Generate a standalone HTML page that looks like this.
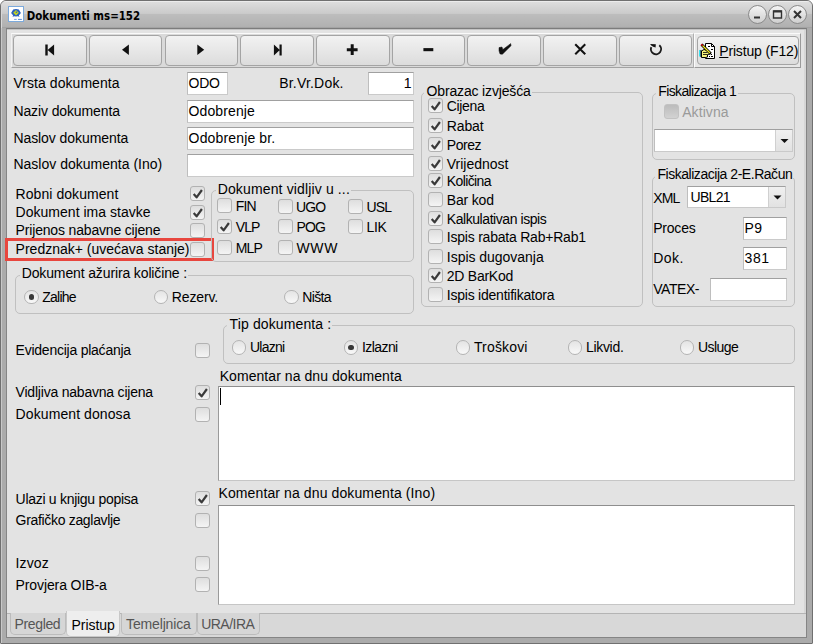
<!DOCTYPE html>
<html><head><meta charset="utf-8"><title>Dokumenti ms=152</title>
<style>
*{box-sizing:border-box;margin:0;padding:0}
html,body{width:813px;height:644px;overflow:hidden;background:#fff}
body{font-family:"Liberation Sans",sans-serif;font-size:14px;color:#000;position:relative}
.a{position:absolute;white-space:nowrap}
#win{left:0;top:0;width:813px;height:644px;border-radius:6px 6px 1px 1px;background:#ababab;border:1px solid #707070;overflow:hidden}
#hl{left:0;top:0;width:811px;height:642px;border-left:1px solid #c8c8c8}
#tb{left:0;top:0;width:811px;height:27px;background:linear-gradient(#dddddd 0,#cbcbcb 44%,#bdbdbd 48%,#b1b1b1 94%,#9c9c9c 100%);border-top:1px solid #ececec;border-left:1px solid #d8d8d8}
#title{left:25.800px;top:7px;font-family:"DejaVu Sans Condensed","DejaVu Sans",sans-serif;font-weight:bold;font-size:11.4px;line-height:16px}
#panel{left:6px;top:28px;width:801px;height:610px;background:#e3e3e3;border:1px solid #858585;border-top-color:#7c7c7c;box-shadow:inset 0 1px 0 #c4c4c4,inset -2px 0 0 #d6d6d6}
.t{line-height:16px;height:16px}
.in{background:#fff;border:1px solid #cacaca;border-top-color:#a0a0a0;border-left-color:#bebebe;overflow:hidden}
.ta{background:#fff;border:1px solid #c6c6c6;border-top-color:#8e8e8e;border-left-color:#9a9a9a}
.cb{width:15px;height:15px;border:1px solid #b2b2b2;border-radius:3px;background:linear-gradient(#dedede,#f4f4f4)}
.cb.dis{background:linear-gradient(#bcbcbc,#d2d2d2);border-color:#c2c2c2}
.rb{width:14.500px;height:14.500px;border:1px solid #b4b4b4;border-radius:7.500px;background:linear-gradient(#e4e4e4,#f8f8f8)}
.rb i{position:absolute;left:3.500px;top:3.500px;width:5.500px;height:5.500px;border-radius:2.750px;background:#383838}
.gb{border:1px solid #c0c0c0;border-radius:5px}
.btn{top:35px;height:30.5px;border:1px solid #a4a4a4;border-radius:4px;background:linear-gradient(#f2f2f2,#e7e7e7 50%,#dcdcdc)}
#tool{left:11px;top:33px;width:683px;height:34.700px;border-top:1px solid #fafafa;border-left:1px solid #f2f2f2;border-bottom:1px solid #a2a2a2;border-right:1px solid #b0b0b0;background:#dadada}
#tool2{left:693.700px;top:33px;width:107.800px;height:34.600px;border-top:1px solid #fafafa;border-left:1.500px solid #fcfcfc;border-bottom:1px solid #9a9a9a;border-right:1px solid #9a9a9a;background:#e7e7e7}
.cbb{background:linear-gradient(#f0f0f0,#e2e2e2);border-left:1px solid #d0d0d0}
#tabs{left:7px;top:612.7px;width:799px;height:24.300px;background:#d8d8d8;border-top:1px solid #b4b4b4}
.tab{border:1px solid #bcbcbc;border-top:none;border-radius:0 0 5px 5px;background:#d6d6d6}
.tab.act{background:#eeeeee;border-color:#c8c8c8}
.wb{width:19px;height:19px;border-radius:10px;border:1px solid #8a8a8a;background:linear-gradient(#f4f4f4,#cfcfcf);top:3.5px}
</style></head><body>
<div id="win" class="a">
<div id="hl" class="a"></div><div id="tb" class="a"></div>
<svg class="a" style="left:7px;top:5px" width="16" height="16" viewBox="0 0 16 16"><rect x="0.500" y="0.500" width="15" height="15" fill="#fff" stroke="#7caadc"/><path d="M3.100 6.900L5.200 3.600L8 2.900L10.800 3.600L12.900 6.900L10.800 9.400L11.600 10.800L9.600 10.200L8 10.600L6.400 10.200L4.400 10.800L5.200 9.400Z" fill="#2a62c0"/><path d="M5.200 6.700L8 4L10.800 6.700L8 9.400Z" fill="#c4d422"/><circle cx="8.400" cy="6.300" r="0.800" fill="#2a62c0"/><rect x="6.100" y="12.900" width="2.600" height="1" fill="#7aa4dc"/><rect x="10" y="12.900" width="3.900" height="1" fill="#5a8cd4"/></svg>
<div id="title" class="a">Dokumenti ms=152</div>
<div class="a wb" style="left:747px"><svg width="17" height="17" viewBox="0 0 17 17"><path d="M5 11.500h6" stroke="#333" stroke-width="2"/></svg></div>
<div class="a wb" style="left:767px"><svg width="17" height="17" viewBox="0 0 17 17"><path d="M4.500 5h8v7h-8z" fill="none" stroke="#333" stroke-width="1.400"/><path d="M4.500 5.500h8" stroke="#333" stroke-width="2"/></svg></div>
<div class="a wb" style="left:787px"><svg width="17" height="17" viewBox="0 0 17 17"><path d="M5 5l7 7M12 5l-7 7" stroke="#333" stroke-width="2"/></svg></div>
</div>
<div id="panel" class="a"></div>
<div class="a" id="tool"></div>
<div class="a btn" style="left:13.2px;width:73.500px"></div>
<div class="a btn" style="left:88.9px;width:73.500px"></div>
<div class="a btn" style="left:164.6px;width:73.500px"></div>
<div class="a btn" style="left:240.3px;width:73.500px"></div>
<div class="a btn" style="left:316.0px;width:73.500px"></div>
<div class="a btn" style="left:391.7px;width:73.500px"></div>
<div class="a btn" style="left:467.3px;width:73.500px"></div>
<div class="a btn" style="left:543.0px;width:73.500px"></div>
<div class="a btn" style="left:618.7px;width:73.500px"></div>
<svg class="a" width="74" height="30" viewBox="-37 -15 74 30" style="left:13px;top:35.250px" fill="#111"><path d="M-4.700 -5.600h2.400v11h-2.400z M4.100 -5.600v11l-6.500-5.500z"/></svg>
<svg class="a" width="74" height="30" viewBox="-37 -15 74 30" style="left:89.5px;top:35.250px" fill="#111"><path d="M1.900 -5.600v10.600l-6.900-5.300z"/></svg>
<svg class="a" width="74" height="30" viewBox="-37 -15 74 30" style="left:165px;top:35.250px" fill="#111"><path d="M-4.700 -5.600v10.600l6.900-5.300z"/></svg>
<svg class="a" width="74" height="30" viewBox="-37 -15 74 30" style="left:240.5px;top:35.250px" fill="#111"><path d="M-4.100 -5.600v11l5.900-5.500z M1.500 -5.600h2.200v11h-2.200z"/></svg>
<svg class="a" width="74" height="30" viewBox="-37 -15 74 30" style="left:316px;top:35.250px" fill="#111"><path d="M-6.200 -1.850h10.800v3h-10.800z M-2.300 -5.750h3v10.800h-3z"/></svg>
<svg class="a" width="74" height="30" viewBox="-37 -15 74 30" style="left:392px;top:35.250px" fill="#111"><path d="M-5.600 -1.900h9.900v3.100h-9.900z"/></svg>
<svg class="a" width="74" height="30" viewBox="-37 -15 74 30" style="left:468px;top:35.250px" fill="#111"><path d="M-6 -2.400 L-3 -3 L-2.200 -0.400 L5.700 -6.400 L6 -4.300 L-2.600 4.300 L-5 3.900 L-6 0.800 Z" stroke="#111" stroke-width="0.500" stroke-linejoin="round"/></svg>
<svg class="a" width="74" height="30" viewBox="-37 -15 74 30" style="left:543.5px;top:35.250px" fill="#111"><path d="M-5.750 -5.650L4.250 4.350M4.250 -5.650L-5.750 4.350" stroke="#111" stroke-width="2.100" fill="none"/></svg>
<svg class="a" width="74" height="30" viewBox="-37 -15 74 30" style="left:619px;top:35.250px" fill="#111"><g transform="translate(0,-0.900)"><path d="M3.300 -3.900 A5.100 5.100 0 1 1 -4.700 -2" stroke="#1a1a1a" stroke-width="1.900" fill="none"/><path d="M-6 -5.100 L-0.200 -4.900 L-0.400 -1.600 L-2.800 -2.400 L-4.400 -3.400Z"/></g></svg>
<div class="a" id="tool2"></div>
<div class="a btn" style="left:697.200px;width:101.400px;top:36.100px;height:28.700px"></div>
<svg class="a" style="left:699px;top:43px" width="16" height="16" viewBox="0 0 16 16">
<path d="M6.500 0.500h6l3 3v12h-9z" fill="#fff" stroke="#000" stroke-width="1"/>
<path d="M12.500 0.500v3h3" fill="none" stroke="#000" stroke-width="1"/>
<path d="M9 3.500h2M12 6.500h2M12 11.500h1M10 13.500h1M12 13.500h2" stroke="#000" stroke-width="1"/>
<path d="M2.500 8l2.500-1.500l3.500 1v1.500l3 1v1l-3 .5v2.500l-2 .5h-4z" fill="#f6f27a" stroke="#000" stroke-width="1"/>
<path d="M4 9.500h4M4 11.500h4" stroke="#000" stroke-width="0.800"/>
<rect x="0" y="7" width="1.600" height="6.500" fill="#3ae2f2"/>
<path d="M2 7v7" stroke="#000" stroke-width="1"/>
<path d="M2.500 1.500L11.800 10.800" stroke="#000" stroke-width="2.800"/>
<path d="M3.500 2.500L11 10" stroke="#f4ec20" stroke-width="1.300"/>
<path d="M2.300 1.300L3.600 2.600" stroke="#e01010" stroke-width="1.500"/>
</svg>
<div class="a t " style="left:719.2px;top:43px;letter-spacing:-0.15px;"><u>P</u>ristup (F12)</div>
<div class="a t " style="left:13.4px;top:75px;letter-spacing:0.06px;">Vrsta dokumenta</div>
<div class="a t " style="left:13.4px;top:103px;letter-spacing:-0.11px;">Naziv dokumenta</div>
<div class="a t " style="left:13.4px;top:130px;letter-spacing:-0.07px;">Naslov dokumenta</div>
<div class="a t " style="left:13.4px;top:156px;letter-spacing:0.01px;">Naslov dokumenta (Ino)</div>
<div class="a in" style="left:187px;top:72px;width:41px;height:23px"></div>
<div class="a t " style="left:188.6px;top:75px;letter-spacing:-0.35px;">ODO</div>
<div class="a t " style="left:279.2px;top:75px;letter-spacing:0.20px;">Br.Vr.Dok.</div>
<div class="a in" style="left:368px;top:72px;width:46px;height:23px"></div>
<div class="a t " style="left:403.7px;top:75px;">1</div>
<div class="a in" style="left:187px;top:100px;width:227px;height:23px"></div>
<div class="a t " style="left:188.6px;top:103px;letter-spacing:0.10px;">Odobrenje</div>
<div class="a in" style="left:187px;top:127px;width:227px;height:23px"></div>
<div class="a t " style="left:188.6px;top:130px;letter-spacing:0.15px;">Odobrenje br.</div>
<div class="a in" style="left:187px;top:154px;width:227px;height:23px"></div>
<div class="a t " style="left:15.6px;top:186px;letter-spacing:0.06px;">Robni dokument</div>
<div class="a cb " style="left:190px;top:186px"><svg width="13" height="13" viewBox="0 0 13 13" style="position:absolute;left:0;top:0"><path d="M2.700 7 L5.600 10.300 L10.900 3" fill="none" stroke="#3a3a3a" stroke-width="2.200" stroke-linejoin="round"/></svg></div>
<div class="a t " style="left:15.6px;top:204px;letter-spacing:0.02px;">Dokument ima stavke</div>
<div class="a cb " style="left:190px;top:205.3px"><svg width="13" height="13" viewBox="0 0 13 13" style="position:absolute;left:0;top:0"><path d="M2.700 7 L5.600 10.300 L10.900 3" fill="none" stroke="#3a3a3a" stroke-width="2.200" stroke-linejoin="round"/></svg></div>
<div class="a t " style="left:15.6px;top:222px;letter-spacing:-0.17px;">Prijenos nabavne cijene</div>
<div class="a cb " style="left:190px;top:223px"></div>
<div class="a t " style="left:15.6px;top:241px;letter-spacing:0.00px;">Predznak+ (uvećava stanje)</div>
<div class="a cb " style="left:190px;top:241.6px"></div>
<div class="a" style="left:5px;top:238px;width:209px;height:23px;border:3px solid #e8463e"></div>
<div class="a gb" style="left:211px;top:190px;width:203px;height:72px"></div>
<div class="a" style="left:215.5px;top:190px;width:135.5px;height:2px;background:#e3e3e3"></div>
<div class="a t " style="left:217.7px;top:181px;letter-spacing:0.14px;">Dokument vidljiv u ...</div>
<div class="a cb " style="left:217px;top:198.3px"></div>
<div class="a t " style="left:235.8px;top:198px;letter-spacing:-0.90px;">FIN</div>
<div class="a cb " style="left:277.9px;top:199.2px"></div>
<div class="a t " style="left:296.0px;top:199px;letter-spacing:-0.90px;">UGO</div>
<div class="a cb " style="left:347.9px;top:199.2px"></div>
<div class="a t " style="left:366.5px;top:199px;letter-spacing:-0.90px;">USL</div>
<div class="a cb " style="left:217px;top:219.1px"><svg width="13" height="13" viewBox="0 0 13 13" style="position:absolute;left:0;top:0"><path d="M2.700 7 L5.600 10.300 L10.900 3" fill="none" stroke="#3a3a3a" stroke-width="2.200" stroke-linejoin="round"/></svg></div>
<div class="a t " style="left:235.8px;top:219px;letter-spacing:-0.90px;">VLP</div>
<div class="a cb " style="left:277.9px;top:219.2px"></div>
<div class="a t " style="left:296.5px;top:219px;letter-spacing:-0.90px;">POG</div>
<div class="a cb " style="left:347.9px;top:219.2px"></div>
<div class="a t " style="left:366.5px;top:219px;letter-spacing:-0.36px;">LIK</div>
<div class="a cb " style="left:217px;top:240.3px"></div>
<div class="a t " style="left:235.8px;top:240px;letter-spacing:-0.90px;">MLP</div>
<div class="a cb " style="left:277.9px;top:240.3px"></div>
<div class="a t " style="left:296.5px;top:240px;letter-spacing:0.60px;">WWW</div>
<div class="a gb" style="left:15px;top:274.5px;width:399px;height:39.5px"></div>
<div class="a" style="left:19.5px;top:274.5px;width:168.8px;height:2px;background:#e3e3e3"></div>
<div class="a t " style="left:21.7px;top:265px;letter-spacing:-0.13px;">Dokument ažurira količine :</div>
<div class="a rb" style="left:24.0px;top:289.7px"><i></i></div>
<div class="a t " style="left:42.3px;top:289px;letter-spacing:-0.77px;">Zalihe</div>
<div class="a rb" style="left:153.5px;top:289.7px"></div>
<div class="a t " style="left:171.8px;top:289px;letter-spacing:-0.15px;">Rezerv.</div>
<div class="a rb" style="left:284.0px;top:289.7px"></div>
<div class="a t " style="left:302.3px;top:289px;letter-spacing:-0.65px;">Ništa</div>
<div class="a gb" style="left:420.5px;top:92px;width:222.5px;height:215px"></div>
<div class="a" style="left:424.4px;top:92px;width:107.60000000000002px;height:2px;background:#e3e3e3"></div>
<div class="a t " style="left:426.6px;top:83px;letter-spacing:-0.16px;">Obrazac izvješća</div>
<div class="a cb " style="left:428.2px;top:98.2px"><svg width="13" height="13" viewBox="0 0 13 13" style="position:absolute;left:0;top:0"><path d="M2.700 7 L5.600 10.300 L10.900 3" fill="none" stroke="#3a3a3a" stroke-width="2.200" stroke-linejoin="round"/></svg></div>
<div class="a t " style="left:446.8px;top:98px;letter-spacing:-0.34px;">Cijena</div>
<div class="a cb " style="left:428.2px;top:118.2px"><svg width="13" height="13" viewBox="0 0 13 13" style="position:absolute;left:0;top:0"><path d="M2.700 7 L5.600 10.300 L10.900 3" fill="none" stroke="#3a3a3a" stroke-width="2.200" stroke-linejoin="round"/></svg></div>
<div class="a t " style="left:446.8px;top:118px;letter-spacing:-0.14px;">Rabat</div>
<div class="a cb " style="left:428.2px;top:136.5px"><svg width="13" height="13" viewBox="0 0 13 13" style="position:absolute;left:0;top:0"><path d="M2.700 7 L5.600 10.300 L10.900 3" fill="none" stroke="#3a3a3a" stroke-width="2.200" stroke-linejoin="round"/></svg></div>
<div class="a t " style="left:446.8px;top:137px;letter-spacing:-0.44px;">Porez</div>
<div class="a cb " style="left:428.2px;top:155.8px"><svg width="13" height="13" viewBox="0 0 13 13" style="position:absolute;left:0;top:0"><path d="M2.700 7 L5.600 10.300 L10.900 3" fill="none" stroke="#3a3a3a" stroke-width="2.200" stroke-linejoin="round"/></svg></div>
<div class="a t " style="left:446.8px;top:156px;letter-spacing:-0.02px;">Vrijednost</div>
<div class="a cb " style="left:428.2px;top:173.2px"><svg width="13" height="13" viewBox="0 0 13 13" style="position:absolute;left:0;top:0"><path d="M2.700 7 L5.600 10.300 L10.900 3" fill="none" stroke="#3a3a3a" stroke-width="2.200" stroke-linejoin="round"/></svg></div>
<div class="a t " style="left:446.8px;top:173px;letter-spacing:-0.62px;">Količina</div>
<div class="a cb " style="left:428.2px;top:192px"></div>
<div class="a t " style="left:446.8px;top:192px;letter-spacing:-0.18px;">Bar kod</div>
<div class="a cb " style="left:428.2px;top:211.2px"><svg width="13" height="13" viewBox="0 0 13 13" style="position:absolute;left:0;top:0"><path d="M2.700 7 L5.600 10.300 L10.900 3" fill="none" stroke="#3a3a3a" stroke-width="2.200" stroke-linejoin="round"/></svg></div>
<div class="a t " style="left:446.8px;top:211px;letter-spacing:-0.44px;">Kalkulativan ispis</div>
<div class="a cb " style="left:428.2px;top:228.8px"></div>
<div class="a t " style="left:446.8px;top:229px;letter-spacing:-0.22px;">Ispis rabata Rab+Rab1</div>
<div class="a cb " style="left:428.2px;top:249px"></div>
<div class="a t " style="left:446.8px;top:248.5px;letter-spacing:-0.03px;">Ispis dugovanja</div>
<div class="a cb " style="left:428.2px;top:268px"><svg width="13" height="13" viewBox="0 0 13 13" style="position:absolute;left:0;top:0"><path d="M2.700 7 L5.600 10.300 L10.900 3" fill="none" stroke="#3a3a3a" stroke-width="2.200" stroke-linejoin="round"/></svg></div>
<div class="a t " style="left:446.8px;top:268px;letter-spacing:-0.26px;">2D BarKod</div>
<div class="a cb " style="left:428.2px;top:287px"></div>
<div class="a t " style="left:446.8px;top:287px;letter-spacing:-0.23px;">Ispis identifikatora</div>
<div class="a gb" style="left:652px;top:92.5px;width:143px;height:67.5px"></div>
<div class="a" style="left:656px;top:92.5px;width:82px;height:2px;background:#e3e3e3"></div>
<div class="a t " style="left:658.2px;top:83px;letter-spacing:-0.61px;">Fiskalizacija 1</div>
<div class="a cb dis" style="left:663.5px;top:103.8px"></div>
<div class="a t " style="left:682.2px;top:104px;letter-spacing:0.08px;color:#9a9a9a">Aktivna</div>
<div class="a in" style="left:654px;top:129px;width:139px;height:23px"><div class="a cbb" style="right:0;top:0;bottom:0;width:17px"><svg width="17" height="21" viewBox="0 0 17 21" style="display:block"><path d="M4.500 9.0h8l-4 4z" fill="#111"/></svg></div></div>
<div class="a gb" style="left:651.5px;top:175.5px;width:143.5px;height:131.5px"></div>
<div class="a" style="left:655.2px;top:175.5px;width:138.69999999999993px;height:2px;background:#e3e3e3"></div>
<div class="a t " style="left:657.4px;top:166px;letter-spacing:-0.46px;">Fiskalizacija 2-E.Račun</div>
<div class="a t " style="left:653.2px;top:190px;letter-spacing:-0.90px;">XML</div>
<div class="a in" style="left:687px;top:185.8px;width:99px;height:22px"><div class="a cbb" style="right:0;top:0;bottom:0;width:17px"><svg width="17" height="20" viewBox="0 0 17 20" style="display:block"><path d="M4.500 8.5h8l-4 4z" fill="#111"/></svg></div></div>
<div class="a t " style="left:690.5px;top:189px;letter-spacing:-0.68px;">UBL21</div>
<div class="a t " style="left:653.2px;top:220px;letter-spacing:-0.20px;">Proces</div>
<div class="a in" style="left:743px;top:217px;width:44px;height:22.5px"></div>
<div class="a t " style="left:744.6px;top:220px;letter-spacing:0.37px;">P9</div>
<div class="a t " style="left:653.2px;top:250px;letter-spacing:0.47px;">Dok.</div>
<div class="a in" style="left:743px;top:247px;width:44px;height:23px"></div>
<div class="a t " style="left:744.6px;top:250px;letter-spacing:0.57px;">381</div>
<div class="a t " style="left:653.2px;top:281px;letter-spacing:-0.44px;">VATEX-</div>
<div class="a in" style="left:709.5px;top:278px;width:77.5px;height:23px"></div>
<div class="a gb" style="left:223px;top:325px;width:572px;height:39px"></div>
<div class="a" style="left:227.4px;top:325px;width:104.9px;height:2px;background:#e3e3e3"></div>
<div class="a t " style="left:229.6px;top:316px;letter-spacing:0.12px;">Tip dokumenta :</div>
<div class="a rb" style="left:231.8px;top:340.1px"></div>
<div class="a t " style="left:249.9px;top:339px;letter-spacing:-0.74px;">Ulazni</div>
<div class="a rb" style="left:343.8px;top:340.1px"><i></i></div>
<div class="a t " style="left:361.9px;top:339px;letter-spacing:-0.56px;">Izlazni</div>
<div class="a rb" style="left:455.8px;top:340.1px"></div>
<div class="a t " style="left:473.9px;top:339px;letter-spacing:0.17px;">Troškovi</div>
<div class="a rb" style="left:567.8px;top:340.1px"></div>
<div class="a t " style="left:585.9px;top:339px;letter-spacing:-0.30px;">Likvid.</div>
<div class="a rb" style="left:679.8px;top:340.1px"></div>
<div class="a t " style="left:697.9px;top:339px;letter-spacing:-0.54px;">Usluge</div>
<div class="a t " style="left:15.6px;top:342px;letter-spacing:-0.24px;">Evidencija plaćanja</div>
<div class="a cb " style="left:194.8px;top:342.6px"></div>
<div class="a t " style="left:15.6px;top:384px;letter-spacing:-0.21px;">Vidljiva nabavna cijena</div>
<div class="a cb " style="left:194.8px;top:384.8px"><svg width="13" height="13" viewBox="0 0 13 13" style="position:absolute;left:0;top:0"><path d="M2.700 7 L5.600 10.300 L10.900 3" fill="none" stroke="#3a3a3a" stroke-width="2.200" stroke-linejoin="round"/></svg></div>
<div class="a t " style="left:15.6px;top:406px;letter-spacing:0.09px;">Dokument donosa</div>
<div class="a cb " style="left:194.8px;top:406.6px"></div>
<div class="a t " style="left:15.6px;top:491px;letter-spacing:-0.29px;">Ulazi u knjigu popisa</div>
<div class="a cb " style="left:194.8px;top:490.6px"><svg width="13" height="13" viewBox="0 0 13 13" style="position:absolute;left:0;top:0"><path d="M2.700 7 L5.600 10.300 L10.900 3" fill="none" stroke="#3a3a3a" stroke-width="2.200" stroke-linejoin="round"/></svg></div>
<div class="a t " style="left:15.6px;top:512px;letter-spacing:-0.32px;">Grafičko zaglavlje</div>
<div class="a cb " style="left:194.8px;top:512.6px"></div>
<div class="a t " style="left:15.6px;top:555px;letter-spacing:0.13px;">Izvoz</div>
<div class="a cb " style="left:194.8px;top:555.6px"></div>
<div class="a t " style="left:15.6px;top:577px;letter-spacing:-0.11px;">Provjera OIB-a</div>
<div class="a cb " style="left:194.8px;top:577.1px"></div>
<div class="a t " style="left:219.7px;top:368px;letter-spacing:0.06px;">Komentar na dnu dokumenta</div>
<div class="a ta" style="left:218px;top:385.500px;width:577px;height:95px"><div class="a" style="left:1.300px;top:1.700px;width:1px;height:16.500px;background:#000"></div></div>
<div class="a t " style="left:218.5px;top:485px;letter-spacing:0.11px;">Komentar na dnu dokumenta (Ino)</div>
<div class="a ta" style="left:218px;top:505px;width:577px;height:100px"></div>
<div class="a" id="tabs"></div>
<div class="a tab" style="left:9.5px;top:613px;width:56px;height:21.500px"></div>
<div class="a t " style="left:14.5px;top:616px;letter-spacing:-0.36px;color:#555">Pregled</div>
<div class="a tab" style="left:121px;top:613px;width:75.5px;height:21.500px"></div>
<div class="a t " style="left:126.1px;top:616px;letter-spacing:-0.16px;color:#555">Temeljnica</div>
<div class="a tab" style="left:196.5px;top:613px;width:63px;height:21.500px"></div>
<div class="a t " style="left:201.2px;top:616px;letter-spacing:-0.53px;color:#555">URA/IRA</div>
<div class="a tab act" style="left:66px;top:611px;width:54px;height:25.5px"></div>
<div class="a t " style="left:71.6px;top:617px;letter-spacing:-0.06px;">Pristup</div>
</body></html>
